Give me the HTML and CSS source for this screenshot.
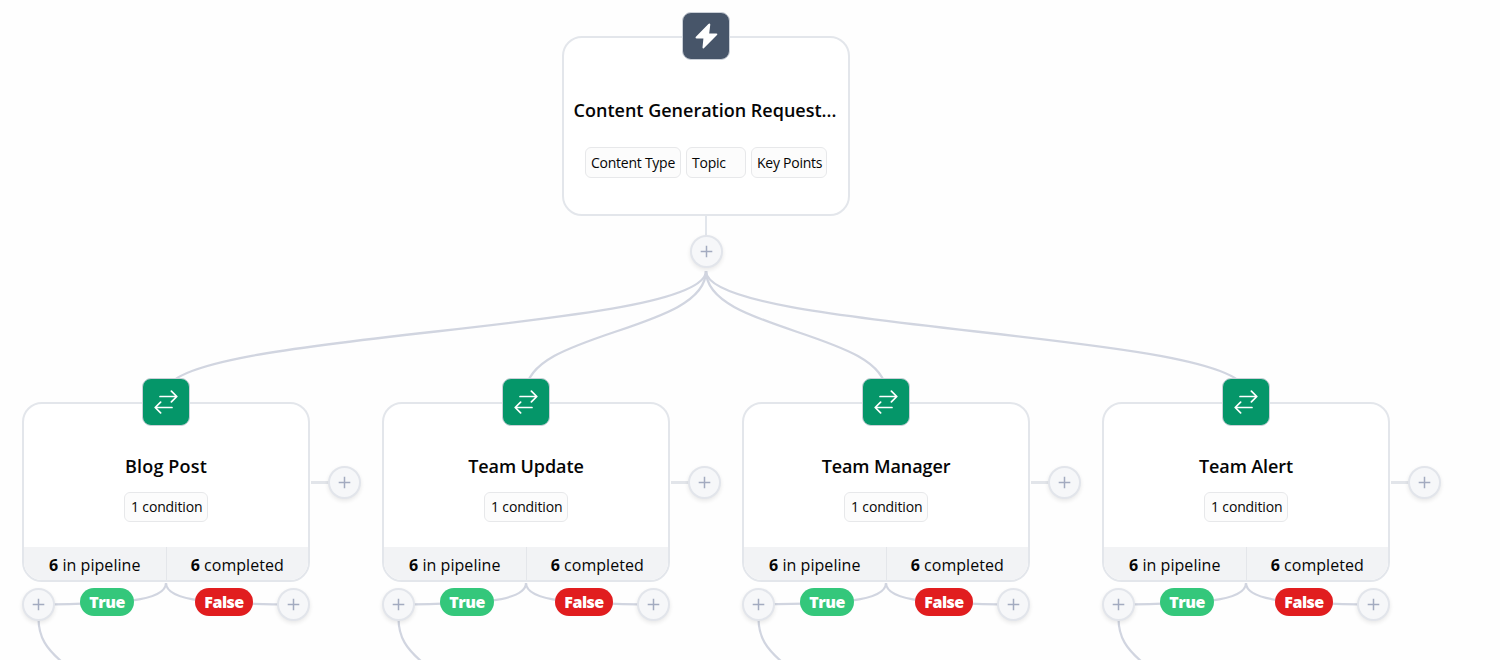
FILE: index.html
```
<!DOCTYPE html>
<html lang="en">
<head>
<meta charset="utf-8">
<title>Workflow</title>
<link rel="stylesheet" href="styles.css">
</head>
<body>
<svg width="0" height="0" class="defs">
  <symbol id="plus" viewBox="0 0 13 13"><path d="M6.5 0.7V12.3M0.7 6.5H12.3" fill="none" stroke="#a3abc0" stroke-width="1.5"/></symbol>
  <symbol id="swap" viewBox="0 0 24 24"><path d="M6 6.5H22.6M17.4 1.2L22.8 6.5L17.4 11.9M18 17.5H1.4M6.6 12.2L1.2 17.5L6.6 22.9" fill="none" stroke="#fff" stroke-width="1.7" stroke-linecap="round" stroke-linejoin="round"/></symbol>
  <symbol id="bolt" viewBox="0 0 23 26"><path d="M13.4 0.9L0.9 13.8Q-0.1 15.5 1.7 15.6H8.4L7.5 24.6Q7.8 26.2 9.1 25L22 12Q23 10.5 21.3 10.4H14.2L15.3 1.5Q14.9 -0.2 13.4 0.9Z" fill="#fff"/></symbol>
  <symbol id="fork" viewBox="0 0 290 80">
    <g fill="none" stroke="#d1d5e0" stroke-width="2.2">
      <path d="M144 1C144 20 93 22 16 22.5"/><path d="M144 1C144 20 195 22 272 22.5"/>
      <path d="M16.5 36C16.5 56 25 67 40 80"/>
    </g>
  </symbol>
</svg>
<main class="canvas">
  <svg class="edges" width="1500" height="660">
    <g fill="none" stroke="#d1d5e0" stroke-width="2.3">
      <path d="M706 271C706 331.5 166 331.5 166 392"/>
      <path d="M706 271C706 331.5 526 331.5 526 392"/>
      <path d="M706 271C706 331.5 886 331.5 886 392"/>
      <path d="M706 271C706 331.5 1246 331.5 1246 392"/>
    </g>
    <path d="M706 216V236" stroke="#e2e6ec" stroke-width="2"/>
  </svg>

  <section class="node trigger">
    <div class="card">
      <h2 class="title long">Content Generation Request...</h2>
      <div class="tags"><span class="tag t1">Content Type</span><span class="tag t2">Topic</span><span class="tag t3">Key Points</span></div>
    </div>
    <div class="badge slate"><svg width="23" height="26"><use href="#bolt"/></svg></div>
    <div class="add below"><svg width="13" height="13"><use href="#plus"/></svg></div>
  </section>

  <section class="node n1">
    <svg class="fork" width="290" height="80"><use href="#fork"/></svg>
    <div class="card"><div class="body"><h2 class="title blog">Blog Post</h2><span class="tag cond">1 condition</span></div>
      <div class="stats"><div class="stat pipe"><span><b>6</b> in pipeline</span></div><div class="stat done"><span><b>6</b> completed</span></div></div></div>
    <div class="badge green"><svg width="24" height="24"><use href="#swap"/></svg></div>
    <i class="link"></i>
    <div class="add side"><svg width="13" height="13"><use href="#plus"/></svg></div>
    <div class="add left"><svg width="13" height="13"><use href="#plus"/></svg></div>
    <div class="add right"><svg width="13" height="13"><use href="#plus"/></svg></div>
    <span class="pill yes">True</span><span class="pill no">False</span>
  </section>

  <section class="node n2">
    <svg class="fork" width="290" height="80"><use href="#fork"/></svg>
    <div class="card"><div class="body"><h2 class="title">Team Update</h2><span class="tag cond">1 condition</span></div>
      <div class="stats"><div class="stat pipe"><span><b>6</b> in pipeline</span></div><div class="stat done"><span><b>6</b> completed</span></div></div></div>
    <div class="badge green"><svg width="24" height="24"><use href="#swap"/></svg></div>
    <i class="link"></i>
    <div class="add side"><svg width="13" height="13"><use href="#plus"/></svg></div>
    <div class="add left"><svg width="13" height="13"><use href="#plus"/></svg></div>
    <div class="add right"><svg width="13" height="13"><use href="#plus"/></svg></div>
    <span class="pill yes">True</span><span class="pill no">False</span>
  </section>

  <section class="node n3">
    <svg class="fork" width="290" height="80"><use href="#fork"/></svg>
    <div class="card"><div class="body"><h2 class="title">Team Manager</h2><span class="tag cond">1 condition</span></div>
      <div class="stats"><div class="stat pipe"><span><b>6</b> in pipeline</span></div><div class="stat done"><span><b>6</b> completed</span></div></div></div>
    <div class="badge green"><svg width="24" height="24"><use href="#swap"/></svg></div>
    <i class="link"></i>
    <div class="add side"><svg width="13" height="13"><use href="#plus"/></svg></div>
    <div class="add left"><svg width="13" height="13"><use href="#plus"/></svg></div>
    <div class="add right"><svg width="13" height="13"><use href="#plus"/></svg></div>
    <span class="pill yes">True</span><span class="pill no">False</span>
  </section>

  <section class="node n4">
    <svg class="fork" width="290" height="80"><use href="#fork"/></svg>
    <div class="card"><div class="body"><h2 class="title">Team Alert</h2><span class="tag cond">1 condition</span></div>
      <div class="stats"><div class="stat pipe"><span><b>6</b> in pipeline</span></div><div class="stat done"><span><b>6</b> completed</span></div></div></div>
    <div class="badge green"><svg width="24" height="24"><use href="#swap"/></svg></div>
    <i class="link"></i>
    <div class="add side"><svg width="13" height="13"><use href="#plus"/></svg></div>
    <div class="add left"><svg width="13" height="13"><use href="#plus"/></svg></div>
    <div class="add right"><svg width="13" height="13"><use href="#plus"/></svg></div>
    <span class="pill yes">True</span><span class="pill no">False</span>
  </section>
</main>
</body>
</html>
```
FILE: styles.css
```
* { box-sizing: border-box; }
body { margin: 0; overflow: hidden; background: #fefefe; color: #050505; font-family: "Open Sans", "Noto Sans", sans-serif; }
.defs { position: absolute; }
.canvas { position: relative; width: 1500px; height: 660px; overflow: hidden; }
.edges { position: absolute; left: 0; top: 0; }
.node { position: absolute; width: 288px; height: 180px; }
.trigger { left: 562px; top: 36px; }
.n1 { left: 22px; top: 402px; }
.n2 { left: 382px; top: 402px; }
.n3 { left: 742px; top: 402px; }
.n4 { left: 1102px; top: 402px; }
.card { display: flex; flex-direction: column; width: 288px; height: 180px; border: 2px solid #e3e6eb; border-radius: 20px; background: #fff; overflow: hidden; }
.trigger .card { align-items: center; padding-top: 60px; }
.title { margin: 0; font-size: 18px; line-height: 24px; font-weight: 600; letter-spacing: -0.1px; white-space: nowrap; }
.long { letter-spacing: 0; margin-left: -2px; }
.blog { letter-spacing: 0.15px; }
.tags { display: flex; gap: 5px; margin-top: 25px; }
.tag { height: 31px; padding-left: 5px; border: 1px solid #e7e8ea; border-radius: 6px; background: #fcfcfc; font-size: 14px; line-height: 30px; letter-spacing: -0.25px; white-space: nowrap; }
.t1 { width: 96px; }
.t2 { width: 60px; }
.t3 { width: 76px; }
.body { display: flex; flex: 1; flex-direction: column; align-items: center; padding-top: 50px; }
.cond { width: 84px; height: 30px; margin-top: 14px; padding-left: 6px; line-height: 28px; letter-spacing: -0.15px; }
.stats { display: flex; height: 33px; background: #f2f3f5; }
.stat { display: flex; flex: 1; justify-content: center; font-size: 16px; line-height: 36px; letter-spacing: 0.05px; white-space: nowrap; }
.pipe { border-right: 1px solid #e4e6ea; }
.badge { position: absolute; left: 120px; top: -24px; display: flex; align-items: center; justify-content: center; width: 48px; height: 48px; border: 1px solid #cbd0d8; border-radius: 9px; }
.slate { background: #475569; }
.green { background: #059669; }
.add { position: absolute; display: flex; align-items: center; justify-content: center; width: 33px; height: 33px; border: 2px solid #e2e5eb; border-radius: 50%; background: #f6f7f9; box-shadow: 0 2px 4px rgba(0, 0, 0, .09); }
.below { left: 128px; top: 199px; }
.side { left: 306px; top: 64px; }
.left { left: 0; top: 186px; }
.right { left: 255px; top: 186px; }
.link { position: absolute; left: 289px; top: 79px; width: 18px; height: 3px; background: #e2e5ea; }
.fork { position: absolute; left: 0; top: 180px; }
.pill { position: absolute; top: 186px; height: 28px; border-radius: 14px; color: #fff; font-size: 16px; font-weight: 800; line-height: 28px; letter-spacing: -0.5px; text-align: center; }
.yes { left: 58px; width: 54px; background: #34c77b; }
.no { left: 173px; width: 58px; background: #e11d1f; }
```
